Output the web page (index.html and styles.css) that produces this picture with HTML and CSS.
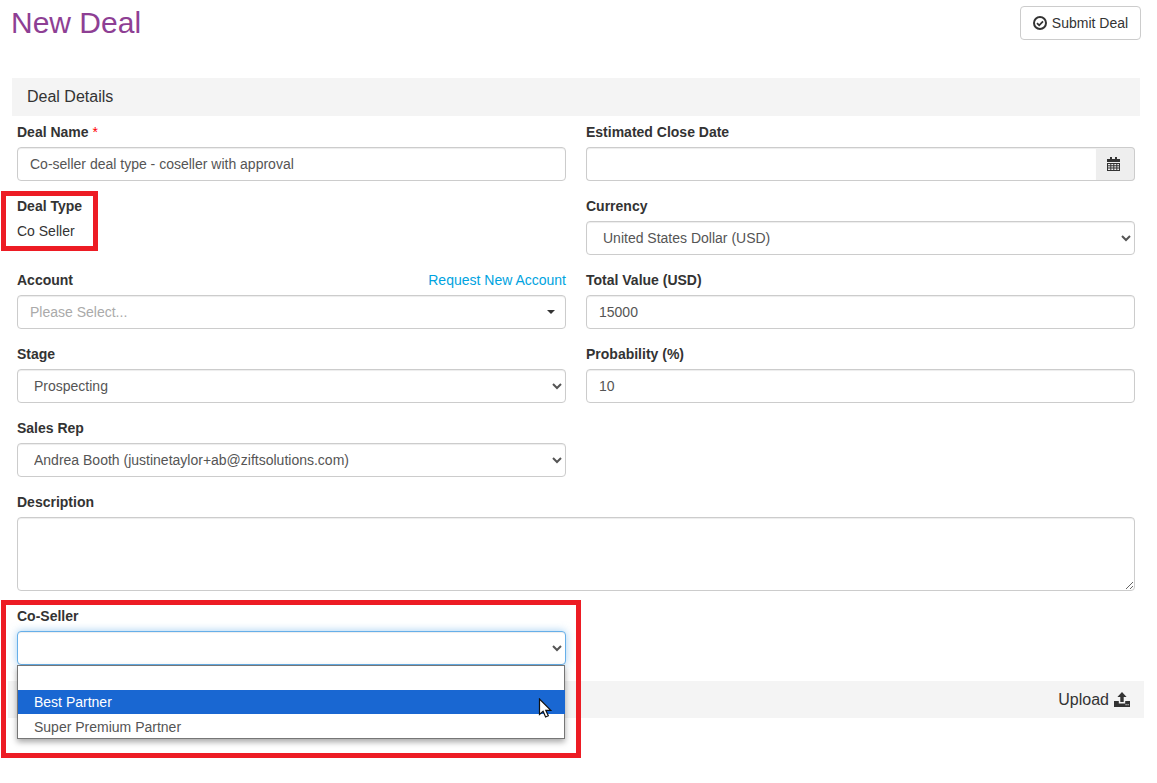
FILE: index.html
```html
<!DOCTYPE html>
<html lang="en">
    <head>
        <title>New Deal</title>
        <link rel="stylesheet" href="styles.css">
    </head>
    <body>
        <div class="page-head">
            <h1 class="page-title">New Deal</h1>
            <button class="btn" type="button">
                <svg class="icon" width="14" height="14" viewBox="0 0 14 14">
                    <circle cx="7" cy="7" r="6" fill="none" stroke="#333" stroke-width="2"/>
                    <path d="M4 7.100 6.200 9.300 10 5.300" fill="none" stroke="#333" stroke-width="1.800"/>
                </svg>
                Submit Deal
            </button>
        </div>

        <div class="section-bar">Deal Details</div>

        <div class="form-grid">
            <div class="field">
                <label class="field-label">Deal Name <span class="required">*</span></label>
                <input class="form-control" type="text" value="Co-seller deal type - coseller with approval">
            </div>
            <div class="field">
                <label class="field-label">Estimated Close Date</label>
                <div class="input-group">
                    <input class="form-control" type="text">
                    <span class="input-addon">
                        <svg width="13" height="14" viewBox="0 0 13 14">
                            <path d="M0 2h3V0h2v2h3V0h2v2h3v3H0z" fill="#333"/>
                            <path d="M0 6h13v8H0zM1 7v1.300h2.300V7zm3.300 0v1.300h2V7zm3 0v1.300h2V7zm3 0v1.300H12V7zM1 9.300v1.300h2.300V9.300zm3.300 0v1.300h2V9.300zm3 0v1.300h2V9.300zm3 0v1.300H12V9.300zM1 11.600V13h2.300v-1.400zm3.300 0V13h2v-1.400zm3 0V13h2v-1.400zm3 0V13H12v-1.400z" fill="#333" fill-rule="evenodd"/>
                        </svg>
                    </span>
                </div>
            </div>

            <div class="field">
                <label class="field-label">Deal Type</label>
                <div class="static-value">Co Seller</div>
            </div>
            <div class="field">
                <label class="field-label">Currency</label>
                <select class="form-control">
                    <option>United States Dollar (USD)</option>
                </select>
            </div>

            <div class="field">
                <div class="label-row">
                    <label class="field-label">Account</label>
                    <a class="link" href="#">Request New Account</a>
                </div>
                <div class="form-control combo">
                    <span class="placeholder">Please Select...</span>
                    <span class="caret"></span>
                </div>
            </div>
            <div class="field">
                <label class="field-label">Total Value (USD)</label>
                <input class="form-control" type="text" value="15000">
            </div>

            <div class="field">
                <label class="field-label">Stage</label>
                <select class="form-control">
                    <option>Prospecting</option>
                </select>
            </div>
            <div class="field">
                <label class="field-label">Probability (%)</label>
                <input class="form-control" type="text" value="10">
            </div>

            <div class="field">
                <label class="field-label">Sales Rep</label>
                <select class="form-control">
                    <option>Andrea Booth (justinetaylor+ab@ziftsolutions.com)</option>
                </select>
            </div>
            <div class="field"></div>

            <div class="field field-wide">
                <label class="field-label">Description</label>
                <textarea class="form-control description"></textarea>
            </div>

            <div class="field">
                <label class="field-label">Co-Seller</label>
                <select class="form-control focused">
                    <option></option>
                </select>
            </div>
        </div>

        <div class="upload-bar">
            Upload
            <svg width="16" height="15" viewBox="0 0 16 15">
                <path d="M8 0l4.600 5H9.700v5H6.300V5H3.400z" fill="#333"/>
                <path d="M0 9h4.800v2.500h6.400V9H16v6H0z" fill="#333"/>
                <path d="M11.500 12.300h1.200v1h-1.200zm2 0h1.200v1h-1.200z" fill="#f3f3f3"/>
            </svg>
        </div>

        <div class="menu-list">
            <div class="menu-item"></div>
            <div class="menu-item menu-item-on">Best Partner</div>
            <div class="menu-item menu-item-last">Super Premium Partner</div>
        </div>
        <svg class="cursor" width="14" height="21" viewBox="0 0 14 21">
            <path d="M1.500 1v15.500l3.600-3.300 2.500 5.800 2.700-1.200-2.500-5.500h5z" fill="#fff" stroke="#111" stroke-width="1.200"/>
        </svg>

        <div class="callout callout-type"></div>
        <div class="callout callout-seller"></div>
    </body>
</html>
```

FILE: styles.css
```css
*{
    box-sizing: border-box;
}
body{
    margin: 0;
    font-family: "Liberation Sans", Arial, sans-serif;
    font-size: 14px;
    line-height: 20px;
    color: #333;
    background-color: #fff;
}

.page-head{
    display: flex;
    justify-content: space-between;
    align-items: flex-start;
    height: 78px;
    margin-left: 11px;
    margin-right: 16px;
    padding-top: 6px;
}
.page-title{
    margin: 0;
    font-size: 30px;
    font-weight: 400;
    line-height: 33px;
    color: #8e3f94;
}
.btn{
    display: flex;
    align-items: center;
    justify-content: center;
    gap: 5px;
    width: 121px;
    height: 34px;
    padding: 0;
    font: inherit;
    color: #333;
    background-color: #fff;
    border: 1px solid #ccc;
    border-radius: 4px;
}

.section-bar{
    height: 38px;
    margin-left: 12px;
    margin-right: 17px;
    padding-left: 15px;
    font-size: 16px;
    line-height: 37px;
    background-color: #f4f4f4;
}

.form-grid{
    display: grid;
    grid-template-columns: 549px 549px;
    column-gap: 20px;
    margin-top: 6px;
    margin-left: 17px;
}
.field{
    min-height: 59px;
    margin-bottom: 15px;
}
.field-wide{
    grid-column: 1 / 3;
}
.field-label{
    display: block;
    margin-bottom: 5px;
    font-weight: 700;
}
.required{
    color: #f00;
    font-weight: 400;
}
.label-row{
    display: flex;
    justify-content: space-between;
}
.link{
    color: #00a3e0;
    text-decoration: none;
}

.form-control{
    display: block;
    width: 100%;
    height: 34px;
    padding: 6px 12px;
    font: inherit;
    color: #555;
    background-color: #fff;
    border: 1px solid #ccc;
    border-radius: 4px;
    box-shadow: inset 0 1px 1px rgba(0,0,0,.075);
}
.focused{
    border-color: #66afe9;
    box-shadow: inset 0 1px 1px rgba(0,0,0,.075), 0 0 8px rgba(102,175,233,.6);
}
.description{
    height: 74px;
}
.static-value{
    height: 34px;
}

.input-group{
    display: flex;
}
.input-group .form-control{
    border-right: 0;
    border-radius: 4px 0 0 4px;
}
.input-addon{
    display: flex;
    flex: none;
    align-items: center;
    justify-content: center;
    width: 39px;
    padding-right: 3px;
    background-color: #eee;
    border: 1px solid #ccc;
    border-left: 0;
    border-radius: 0 4px 4px 0;
}

.combo{
    display: flex;
    align-items: center;
    justify-content: space-between;
}
.placeholder{
    color: #aaa;
}
.caret{
    width: 0;
    height: 0;
    margin-right: -2px;
    border-top: 4px solid #333;
    border-left: 4px solid transparent;
    border-right: 4px solid transparent;
}

.menu-list{
    position: absolute;
    top: 665px;
    left: 17px;
    width: 548px;
    height: 74px;
    background-color: #fff;
    border: 1px solid #767676;
    box-shadow: 0 3px 6px rgba(0,0,0,.35);
}
.menu-item{
    height: 24px;
    padding-left: 16px;
    line-height: 24px;
    color: #555;
}
.menu-item-on{
    margin-right: -1px;
    color: #fff;
    background-color: #1967d2;
}
.menu-item-last{
    line-height: 26px;
}
.cursor{
    position: absolute;
    top: 698px;
    left: 538px;
}

.upload-bar{
    display: flex;
    align-items: center;
    justify-content: flex-end;
    gap: 5px;
    height: 37px;
    margin-top: 1px;
    margin-left: 8px;
    margin-right: 13px;
    padding-right: 14px;
    font-size: 16px;
    background-color: #f4f4f4;
}

.callout{
    position: absolute;
    border: 5px solid #ed1c24;
}
.callout-type{
    top: 191px;
    left: 1px;
    width: 97px;
    height: 60px;
}
.callout-seller{
    top: 600px;
    left: 1px;
    width: 580px;
    height: 158px;
}
```
